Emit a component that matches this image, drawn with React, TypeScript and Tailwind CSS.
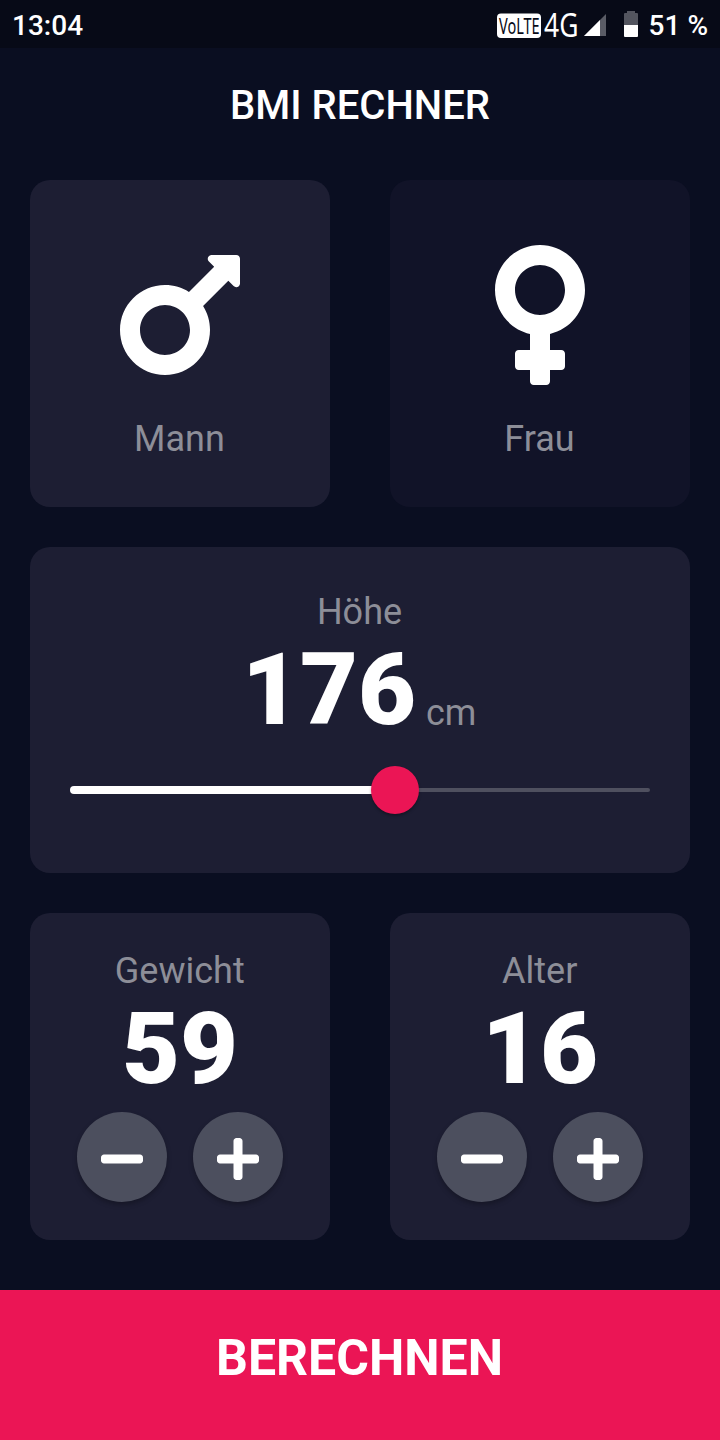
import { useState } from "react";
import type { ReactNode } from "react";
import { FaMars, FaMinus, FaPlus, FaVenus } from "react-icons/fa";

const MIN_HEIGHT = 120;
const MAX_HEIGHT = 220;

function StatusBar() {
  return (
    <header className="flex h-12 items-center justify-between bg-[#070A17] px-3 text-[28px] font-medium">
      <span className="pt-[3px] leading-[45px]">13:04</span>
      <div className="flex items-center">
        <svg className="h-12 w-[153px]" viewBox="0 0 153 48" fill="#fff">
          <rect x="1" y="13.5" width="44" height="24.5" rx="4" />
          <text transform="translate(3 34) scale(0.66 1)" fontSize="22" fill="#070A17" className="font-['Noto_Sans',sans-serif] font-normal">VoLTE</text>
          <text transform="translate(48 36.5) scale(0.79 1)" fontSize="33.5" className="font-['Noto_Sans',sans-serif] font-normal">4G</text>
          <path d="M110 14v22H88z" fill="#5A5C66" />
          <path d="M104 20v16H88z" />
          <path d="M131 11h8v2h2q1 0 1 1v11h-14V14q0-1 1-1h2z" fill="#53555F" />
          <path d="M128 25h14v11q0 1-1 1h-12q-1 0-1-1z" />
        </svg>
        <span className="pt-[3px] leading-[45px]">51 %</span>
      </div>
    </header>
  );
}

function GenderCard({ label, active, onClick, children }: { label: string; active: boolean; onClick: () => void; children: ReactNode }) {
  return (
    <button
      onClick={onClick}
      className={`flex flex-col items-center rounded-[20px] pt-[55px] ${active ? "bg-[#1D1E33]" : "bg-[#111328]"}`}
    >
      {children}
      <span className="mt-6 pr-px text-[36px] leading-10 text-[#8D8E98]">{label}</span>
    </button>
  );
}

function RoundButton({ label, onClick, children }: { label: string; onClick: () => void; children: ReactNode }) {
  return (
    <button
      aria-label={label}
      onClick={onClick}
      className="flex size-[90px] items-center justify-center rounded-full bg-[#4C4F5E] pt-1 shadow-[0_3px_5px_rgba(0,0,0,0.25)]"
    >
      {children}
    </button>
  );
}

function CounterCard({ label, value, onChange }: { label: string; value: number; onChange: (value: number) => void }) {
  return (
    <section className="flex flex-col items-center rounded-[20px] bg-[#1D1E33] pt-[38px]">
      <h2 className="pr-[0.5px] text-[36px] leading-10 text-[#8D8E98]">{label}</h2>
      <p className="text-[100px] leading-[116px] font-black">{value}</p>
      <div className="mt-[4.67px] flex gap-[26px]">
        <RoundButton label="minus" onClick={() => onChange(value - 1)}>
          <FaMinus className="h-12 w-[42px]" />
        </RoundButton>
        <RoundButton label="plus" onClick={() => onChange(value + 1)}>
          <FaPlus className="h-12 w-[42px]" />
        </RoundButton>
      </div>
    </section>
  );
}

function HeightSlider({ value }: { value: number }) {
  const percent = ((value - MIN_HEIGHT) / (MAX_HEIGHT - MIN_HEIGHT)) * 100;
  return (
    <div className="mt-[18px] flex h-12 w-[580px] items-center">
      <div className="h-2 rounded-l-full bg-white" style={{ width: `${percent}%` }} />
      <div className="z-10 -mx-6 size-12 shrink-0 rounded-full bg-[#EB1555] shadow-[0_2px_3px_rgba(0,0,0,0.3)]" />
      <div className="h-1 flex-1 rounded-r-full bg-[#4F505F]" />
    </div>
  );
}

export default function App() {
  const [gender, setGender] = useState("male");
  const [weight, setWeight] = useState(59);
  const [age, setAge] = useState(16);
  const height = 176;

  return (
    <div className="flex h-[1440px] w-[720px] flex-col bg-[#0A0E21] font-[Roboto,sans-serif] text-white">
      <StatusBar />
      <h1 className="flex h-28 items-center justify-center pt-1 text-[40px] leading-[48px] font-medium">BMI RECHNER</h1>
      <main className="mx-[30px] mt-5 grid h-[1060px] grid-cols-2 grid-rows-3 gap-x-[60px] gap-y-10">
        <GenderCard label="Mann" active={gender === "male"} onClick={() => setGender("male")}>
          <FaMars className="h-40 w-[120px]" />
        </GenderCard>
        <GenderCard label="Frau" active={gender === "female"} onClick={() => setGender("female")}>
          <FaVenus className="h-40 w-[90px]" />
        </GenderCard>
        <section className="col-span-2 flex flex-col items-center rounded-[20px] bg-[#1D1E33] pt-[45px]">
          <h2 className="pr-px text-[36px] leading-10 text-[#8D8E98]">Höhe</h2>
          <p className="flex h-[116px] items-start pr-[1.5px]">
            <span className="text-[100px] leading-[116px] font-black">{height}</span>
            <span className="pt-[61px] pl-[10px] text-[36px] leading-10 text-[#8D8E98]">cm</span>
          </p>
          <HeightSlider value={height} />
        </section>
        <CounterCard label="Gewicht" value={weight} onChange={setWeight} />
        <CounterCard label="Alter" value={age} onChange={setAge} />
      </main>
      <button className="mt-auto flex h-[150px] w-full items-center justify-center bg-[#EB1555] pr-px pb-[14px] text-[50px] leading-[58px] font-bold">
        BERECHNEN
      </button>
    </div>
  );
}
